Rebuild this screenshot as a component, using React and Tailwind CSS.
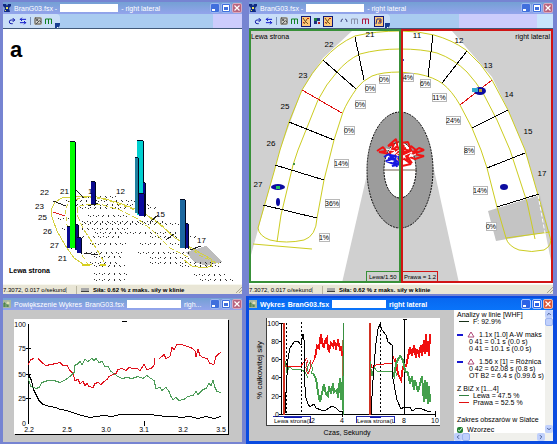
// icons
import { Undo2, ArrowLeftRight, Image, ChevronUp, ChevronDown, ChevronLeft, ChevronRight } from "lucide-react";

// window buttons
function WindowButtons({ active }) {
  const blue = active
    ? "h-[10px] w-[10px] rounded-xs border border-[#a9c4ff] bg-[#2c62e6] flex items-center justify-center"
    : "h-[10px] w-[10px] rounded-xs border border-[#9db8f2] bg-[#406fdc] flex items-center justify-center";
  const red = active
    ? "h-[10px] w-[10px] rounded-xs border border-[#f0b8a8] bg-[#dc5636] flex items-center justify-center"
    : "h-[10px] w-[10px] rounded-xs border border-[#d8a8c0] bg-[#b8647e] flex items-center justify-center";

  return (
    <div className="ml-auto flex shrink-0 gap-px">
      <button aria-label="Minimize" className={blue}>
        <svg viewBox="0 0 6 6" className="size-[6px]">
          <path d="M0 4h3v2H0z" fill="#fff" />
        </svg>
      </button>
      <button aria-label="Maximize" className={blue}>
        <svg viewBox="0 0 6 6" className="size-[6px]">
          <path d="M0 0h6v6H0z M1 2v3h4V2z" fill="#fff" fillRule="evenodd" />
        </svg>
      </button>
      <button aria-label="Close" className={red}>
        <svg viewBox="0 0 6 6" className="size-[6px]">
          <path d="M0.5 0.5l5 5M5.5 0.5l-5 5" stroke="#fff" strokeWidth="1.2" />
        </svg>
      </button>
    </div>
  );
}

function AppIcon({ chart }) {
  if (chart) {
    return (
      <svg viewBox="0 0 8 8" className="size-2 shrink-0">
        <path d="M0 0h8v8H0z" fill="#a8b8a0" />
        <path d="M1 7V3h1v4M4 7V4h1v3" stroke="#3a7a3a" fill="none" />
        <circle cx="5" cy="3" r="1.5" fill="#e0e0b0" />
      </svg>
    );
  }
  return (
    <svg viewBox="0 0 8 8" className="size-2 shrink-0">
      <path d="M0 0h3l1 2 1-2h3v2L6 4l1 4H1l1-4-2-2z" fill="#102a80" />
      <path d="M3 3h2v2H3z M2 6h1v1H2z" fill="#e8e060" />
    </svg>
  );
}

function Window({ title, file, suffix, active, chart, children }) {
  return (
    <section
      className={
        active
          ? "flex min-h-0 min-w-0 flex-col bg-[#0a4be0] pt-[2px] pr-1 pb-[3px] pl-[3px]"
          : "flex min-h-0 min-w-0 flex-col bg-[#7684d2] pt-[2px] pr-1 pb-[2px] pl-[3px]"
      }
    >
      <header
        className={
          active
            ? "flex h-3 shrink-0 items-center gap-[3px] overflow-hidden bg-linear-to-b from-[#0868f0] to-[#0a74fa] text-[7px] leading-none font-bold whitespace-nowrap text-white"
            : "flex h-3 shrink-0 items-center gap-[3px] overflow-hidden bg-linear-to-b from-[#74a0d4] to-[#93a4ec] text-[7px] leading-none whitespace-nowrap text-white"
        }
      >
        <AppIcon chart={chart} />
        {title && <span>{title}</span>}
        <span>{file}</span>
        <span className={chart ? "h-2 w-[54px] shrink-0 bg-white" : "h-2 w-[58px] shrink-0 bg-white"} />
        <span>{suffix}</span>
        <WindowButtons active={active} />
      </header>
      {children}
    </section>
  );
}

// toolbar
function ToolButton({ label, on, children }) {
  return (
    <button
      aria-label={label}
      className={
        on
          ? "flex h-[11px] w-[10px] items-center justify-center border border-[#101878] bg-[#ffc878]"
          : "flex h-[11px] w-[10px] items-center justify-center"
      }
    >
      {children}
    </button>
  );
}

function Waves({ color }) {
  return (
    <svg viewBox="0 0 8 8" className="size-2">
      <path d="M0.5 7V2h3v5M3.5 2h3v5" stroke={color} fill="none" />
    </svg>
  );
}

function ScatterIcon() {
  return (
    <svg viewBox="0 0 8 8" className="size-2">
      <path d="M1 1l2 3M3 4l3 3M5 2l-3 5" stroke="#705020" fill="none" />
      <path d="M5 1h2v1H5z M1 5h1v1H1z" fill="#c02010" />
    </svg>
  );
}

function BaseTools() {
  return (
    <>
      <ToolButton label="Undo">
        <Undo2 className="size-2 -scale-x-100 text-[#1018a8]" strokeWidth={3} />
      </ToolButton>
      <ToolButton label="Swap">
        <ArrowLeftRight className="size-2 text-[#1018c8]" strokeWidth={3} />
      </ToolButton>
      <span className="mx-px h-2 w-px bg-[#7890b8]" />
      <ToolButton label="Picture">
        <Image className="size-2 bg-[#d0d0c8] text-[#505050]" strokeWidth={3} />
      </ToolButton>
      <ToolButton label="Chart">
        <Waves color="#108020" />
      </ToolButton>
    </>
  );
}

function Toolbar({ children, tail }) {
  return (
    <div className="flex h-[15px] shrink-0 border-b border-[#405878] bg-[#a9cbf0]">
      <div className="flex items-center gap-px rounded-r bg-[#c9def8] pl-1">
        {children}
        <span className="mt-auto flex size-[5px] items-end justify-center rounded-br bg-[#183c90]">
          <span className="size-px bg-white" />
        </span>
      </div>
      {tail}
    </div>
  );
}

function StatusBar() {
  return (
    <footer className="flex h-[10px] shrink-0 items-center gap-1 overflow-hidden border-t border-[#f8f8f0] bg-[#e9e6d6] text-[6px] leading-none whitespace-nowrap text-black">
      <span className="w-[64px] shrink-0 border-r border-[#b8b4a0]">7.3072, 0.017 o/sekund</span>
      <span className="h-2 w-[6px] shrink-0 border-r border-[#b8b4a0]" />
      <span className="h-1 w-2 shrink-0 border-b border-[#404040] bg-[#a8a8a8]" />
      <span className="font-bold">Siła: 0.62 % z maks. siły w klinie</span>
      <svg viewBox="0 0 6 6" className="ml-auto size-[6px] shrink-0">
        <path d="M6 0L0 6M6 3L3 6" stroke="#a8a490" />
      </svg>
    </footer>
  );
}

// 3d view
const teeth3d = [
  ["22", 40, 194], ["21", 60, 193], ["1", 88, 193], ["12", 116, 193], ["23", 35, 208], ["25", 38, 219],
  ["26", 43, 233], ["27", 50, 247], ["21", 58, 260], ["15", 156, 216], ["17", 197, 242],
];

const dotRows = [
  [80, 118, 196], [66, 136, 200], [62, 150, 204], [80, 160, 207], [88, 128, 215], [58, 74, 218], [82, 165, 221],
  [80, 180, 223], [62, 130, 228], [95, 190, 232], [68, 120, 236], [150, 198, 236], [90, 126, 243], [140, 185, 243],
  [86, 122, 252], [138, 192, 252], [94, 124, 256], [150, 190, 257], [90, 118, 262], [150, 222, 262],
  [94, 126, 265], [180, 220, 265], [94, 128, 273], [194, 226, 274], [94, 126, 279], [200, 234, 279],
];

// x, y, width, height, fill
const bars = [
  [91, 181, 4, 23, "#0a0a90"],
  [67, 226, 4, 22, "#0a0a90"],
  [75, 224, 3, 26, "#0a0a80"],
  [77, 237, 4, 16, "#0a0a90"],
  [70, 141, 5, 107, "#00ff00"],
  [137, 140, 6, 75, "#00d0d0"],
  [135, 157, 3, 56, "#2080a0"],
  [143, 182, 2, 33, "#0a0a90"],
  [139, 193, 5, 23, "#0a0aa0"],
  [185, 223, 3, 25, "#0a0a90"],
  [180, 199, 5, 49, "#1c68a0"],
];

function Force3D() {
  return (
    <div className="min-h-0 flex-1 bg-white">
      <svg viewBox="3 29 239 255" className="block h-full w-full" shapeRendering="crispEdges">
        <text x="10" y="57" fontSize="22" fontWeight="bold">a</text>
        <path d="M186 252l20-6 16 16-16 4-12-4z" fill="#bdbdbd" />
        {dotRows.map(([x1, x2, y]) => (
          <g key={`${x1}-${y}`} stroke="#303030">
            <path d={`M${x1} ${y}.5H${x2}`} strokeDasharray="1 4" />
            <path d={`M${x1 + 2} ${y + 1}.5H${x2}`} strokeDasharray="1 5" />
          </g>
        ))}
        <g fill="none" stroke="#d4d040">
          <path d="M92 264h-9l-9-6-9-13-8-14-5-14-1-7 4-8 7-4 12-1 18-1 14 3 16 5 18 7 15 9 20 18 20 12 16 9 1 7-8 2-12-2-8-6" />
          <path d="M104 262l-8-14-12-18-7-15v-8l10-3 16 1 17 5 18 9 14 11 18 18 20 10" strokeDasharray="6 2" />
          <path d="M88 265l-12-20-9-20-2-16 5-8 15-4 22 3 28 10 24 13 18 16 24 17 18 8" strokeDasharray="4 3" />
        </g>
        <path d="M53 201l13 5M76 190l8 8M150 222l8-7M166 240l8-6M190 250l11-4M84 253l14 2M88 206l10-3" stroke="#202020" />
        <path d="M53 212l12 4" stroke="#e02020" />
        <path d="M82 265h8M100 265h6" stroke="#d8d020" strokeWidth="2" />
        {bars.map(([x, y, w, h, fill]) => (
          <g key={`${x}-${y}`}>
            <path d={`M${x} ${y}h${w}v${h}h-${w}z`} fill={fill} />
            <path d={`M${x} ${y}.5h${w}M${x + w}.5 ${y + 1}v${h}`} stroke="#000820" />
          </g>
        ))}
        <g fontSize="8">
          {teeth3d.map(([label, x, y]) => (
            <text key={`${x}-${y}`} x={x} y={y + 1}>{label}</text>
          ))}
        </g>
        <text x="9" y="273" fontSize="7" fontWeight="bold">Lewa strona</text>
      </svg>
    </div>
  );
}

// arch view
const teeth = [
  ["22", 329, 44], ["21", 370, 34], ["23", 303, 75], ["25", 285, 106], ["26", 271, 143], ["27", 258, 184],
  ["11", 417, 35], ["12", 459, 40], ["13", 488, 65], ["14", 509, 94], ["15", 528, 131], ["17", 542, 173],
];

const percents = [
  ["0%", 384, 79], ["0%", 370, 88], ["0%", 360, 104], ["0%", 349, 130], ["14%", 341, 163], ["36%", 332, 203],
  ["1%", 324, 237], ["4%", 408, 77], ["6%", 425, 83], ["11%", 439, 97], ["24%", 453, 120], ["8%", 469, 150],
  ["14%", 480, 190], ["0%", 491, 226],
];

function Arch() {
  return (
    <div className="min-h-0 flex-1 bg-white">
      <svg viewBox="249 29 304 255" className="block h-full w-full">
        <path d="M251 31H352L323 58L302 90L280 150L251 255z" fill="#d0d0d0" />
        <path d="M452 31H552V266L538 195L525 150L508 110L492 77z" fill="#d0d0d0" />
        <path d="M368 170L342 283H459L433 165z" fill="#d0d0d0" />
        <ellipse cx="400" cy="170" rx="33" ry="58" fill="#9c9c9c" stroke="#000" strokeDasharray="2 1" />
        <ellipse cx="400" cy="170" rx="16" ry="28" fill="#fff" stroke="#000" strokeDasharray="2 1" />
        <path d="M488 211l52-16 9 37-53 9z" fill="#c4c4c4" />

        <g fill="none" stroke="#cccc20">
          <path d="M258 228L274 172L280 150L289 122L302 90Q312 72 323 60Q337 44 355 36Q376 31 400 31Q418 31 434 35Q452 40 466 50Q482 64 492 80L508 110L525 150L538 195L550 237Q553 245 544 250Q532 253 519 250Q508 246 506 238L497 207L487 168L481 150L472 128L460 105Q452 91 443 84Q434 77 418 74L400 72Q382 72 372 76Q362 81 357 88Q347 102 343 112L334 140L324 180L317 218Q316 236 304 240Q286 244 270 240Q259 236 258 228" />
          <path d="M277 242L281 215L293 165L298 150L318 100Q326 84 337 72Q347 60 360 54Q378 49 400 49Q422 49 437 53Q454 59 467 72Q476 82 483 93L497 120L510 150L527 202L535 239" />
          <path d="M253 244L312 249M506 238L550 232" />
        </g>
        <g stroke="#000" shapeRendering="crispEdges">
          <path d="M355 37L364 80M323 60L356 89M289 122L334 140M275 165L324 180M263 205L317 218" />
          <path d="M433 35L428 77M467 51L442 83M508 110L472 128M525 153L487 168M539 194L497 207" />
        </g>
        <path d="M302 90L342 113M492 80L460 105" stroke="#e01010" shapeRendering="crispEdges" />
        <path d="M538 195l7 38" stroke="#fff" strokeDasharray="4 2" />

        <g fill="#0c0ca0">
          <ellipse cx="278" cy="187" rx="7" ry="3" />
          <ellipse cx="278" cy="202" rx="2" ry="4" />
          <ellipse cx="504" cy="187" rx="4" ry="3" />
          <ellipse cx="480" cy="91" rx="6" ry="4" />
          <circle cx="403" cy="60" r="1" />
        </g>
        <path d="M276 186h4v3h-4z" fill="#20c060" />
        <path d="M293 163h2v2h-2z" fill="#409040" />
        <path d="M472 88h6v4h-6z" fill="#30a8d0" />
        <path d="M479 89h3v3h-3z" fill="#c0a030" />

        <path d="M384 170h32" stroke="#706050" />
        <g fill="none" strokeLinejoin="bevel">
          <path
            d="M377 151L383 147L386 151L379 152L390 154L394 144L388 146L396 139L398 149L389 152L402 150L399 141L404 153L395 156L404 146L400 143L408 142L411 150L403 155L417 151L411 146L407 156L419 148L424 150L413 154L424 156L415 159L407 156L412 163L403 158L411 164L402 166L398 158L408 160L404 152L414 152L396 147L392 151L406 148"
            stroke="#f01414" strokeWidth="2"
          />
          <path d="M386 149l9 2-4 4 8-5 4 6 9-4-3 5 7-3M399 143l3 8-6 4 8 3" stroke="#fff" />
          <path
            d="M384 157L389 154L392 159L386 161L394 164L396 156L390 155L399 163L392 166L401 164L398 156M388 158L395 160L397 167"
            stroke="#1818e0" strokeWidth="2"
          />
        </g>

        <g fontSize="7" textAnchor="middle">
          {teeth.map(([label, x, y]) => (
            <text key={`${x}-${y}`} x={x} y={y + 3} fontSize="8">{label}</text>
          ))}
          {percents.map(([label, x, y]) => (
            <g key={`${x}-${y}`}>
              <rect
                x={x - (label.length > 2 ? 7 : 5)} y={y - 4} width={label.length > 2 ? 14 : 10} height="8"
                fill="#fff" stroke="#b8b8b8" shapeRendering="crispEdges"
              />
              <text x={x} y={y + 3}>{label}</text>
            </g>
          ))}
        </g>

        <g fill="none" strokeWidth="2" shapeRendering="crispEdges">
          <path d="M250 30H400V282H250z" stroke="#389038" />
          <path d="M402 30H552V282H402z" stroke="#d01414" />
        </g>
        <path d="M366 281V271H399" stroke="#389038" fill="none" shapeRendering="crispEdges" />
        <path d="M403 271H437V281" stroke="#d01414" fill="none" shapeRendering="crispEdges" />
        <g fontSize="6">
          <text x="369" y="279">Lewa/1.50</text>
          <text x="404" y="279">Prawa = 1.2</text>
        </g>
        <g fontSize="7">
          <text x="251" y="39">Lewa strona</text>
          <text x="550" y="39" textAnchor="end">right lateral</text>
        </g>
      </svg>
    </div>
  );
}

// zoomed chart
function ZoomChart() {
  return (
    <div className="min-h-0 flex-1 bg-[#c6c6c6]">
      <svg viewBox="3 310 239 131" className="block h-full w-full" shapeRendering="crispEdges">
        <rect x="15" y="319" width="214" height="115" fill="#000" />
        <rect x="14" y="318" width="214" height="115" fill="#fff" />
        <path d="M28.5 323V423M26 347.5h5M26 373.5h5M26 397.5h5M144.5 420v5M122 320.5h5" stroke="#000" />
        <g fill="none">
          <path
            d="M28 373L31 379L34 390L39 400L43 404L50 406L56 407L60 409L67 410L75 413L82 415L90 417L96 416L104 415L112 416L120 414L150 414L158 415L166 416L174 416L181 417L190 416L198 418L206 416L214 418L221 416"
            stroke="#000"
          />
          <path
            d="M28 364L31 359L34 358M38 358L42 362L46 365L51 364L56 363L60 362L63 365L67 365L70 370L73 373L75 380L78 379L80 383L83 381L85 385L87 383L89 386L93 387L95 383L98 382L101 384L104 381L107 379L109 376L113 374L116 373L118 369L122 368L126 370L129 367L133 368L137 368L140 370L144 364L147 369L151 368L154 365L155 358M159 358L162 356L164 354L166 358L170 356L172 347L174 349L177 344L182 344L187 346L191 347L195 350L196 356L198 349L200 355L203 357L207 358L210 363L214 364L216 356L219 353L221 352"
            stroke="#e0101c"
          />
          <path
            d="M28 378L31 386L36 388L39 387L42 382L48 380L54 380L60 382L66 379L70 376L74 372L74 365L77 364L80 361L82 364L85 359L88 361L92 358L94 360L96 358L99 362L102 361L105 366L108 366L111 371L115 374L118 376L122 378L127 377L132 378L138 376L143 378L147 375L151 378L154 380L156 388L160 387L162 390L166 387L169 391L171 396L173 399L176 397L179 400L184 399L188 396L193 395L196 391L198 394L203 389L206 388L209 383L211 385L213 380L215 387L217 391L221 392"
            stroke="#4c9c58"
          />
        </g>
        <g fontSize="7" textAnchor="end">
          <text x="26" y="326">100</text>
          <text x="26" y="350">75</text>
          <text x="26" y="376">50</text>
          <text x="26" y="400">25</text>
          <text x="26" y="425">0</text>
        </g>
        <g fontSize="7" textAnchor="middle">
          <text x="29" y="431">2.2</text>
          <text x="67" y="431">2.5</text>
          <text x="106" y="431">3.0</text>
          <text x="144" y="431">3.1</text>
          <text x="183" y="431">3.2</text>
          <text x="221" y="431">3.5</text>
        </g>
      </svg>
    </div>
  );
}

// force over time chart
const yLabels = [["100", 323], ["80", 341], ["60", 359], ["40", 377], ["20", 396], ["0", 414]];
const xLabels = [["2", 313], ["4", 342], ["8", 404], ["10", 435]];

function TimeChart() {
  return (
    <svg viewBox="249 310 205 131" className="block h-full min-w-0 flex-1" shapeRendering="crispEdges">
      <rect x="266" y="318" width="174" height="107" fill="#fff" />
      <path d="M266.5 318V425M266 425.5H440" stroke="#404040" fill="none" />
      <path d="M281.5 323V415M279 323.5h5M279 341.5h3M279 359.5h3M279 377.5h3M279 396.5h3M279 414.5H436M435.5 411v6M342.5 411v6" stroke="#000" fill="none" />
      <path d="M284 323v92M370 323v92" stroke="#d03020" strokeWidth="2" />
      <path d="M343.5 323v92" stroke="#389040" />
      <path d="M342.5 340v68" stroke="#a07040" />
      <path d="M286.5 323v92M301.5 322v93M380.5 322v93" stroke="#000" strokeDasharray="2 2" />
      <path d="M404.5 319v96M403 319.5h4" stroke="#000" />
      <g fill="none">
        <g stroke="#f01010">
          <path d="M285 362L287 368L290 366L301 366L304 362L307 358M312 364L315 358" />
          <path
            d="M315 358L317 346L319 348L321 334L322 342L324 348L325 341L327 338L328 349L329 351L331 343L333 346L334 340L336 348L338 341L340 349L341 346L342 356"
            strokeWidth="2"
          />
          <path d="M370 360L372 368L376 365L392 363L393 356L395 362L396 358" />
          <path
            d="M396 361L398 374L401 380L403 367L406 366L408 357L410 347L412 356L414 345L416 358L417 349L419 355L421 345L422 356L424 340L425 354L426 334L427 352L428 341L429 356L430 334"
            strokeWidth="2"
          />
        </g>
        <g stroke="#44a04c">
          <path d="M285 361L287 373L289 367L294 370L301 369L305 372L308 378M370 361L372 376L374 367L377 371L392 372" />
          <path
            d="M313 373L316 379L318 392L320 402L322 393L324 384L326 394L328 396L329 386L331 394L333 383L334 392L337 390L338 398L340 378L341 400L343 376V410"
            strokeWidth="2"
          />
          <path
            d="M392 371L394 376L396 364L400 356L403 360L405 371L408 373L410 384L412 376L414 390L415 380L418 392L420 384L422 376L424 402L425 380L426 399L427 382L428 404L429 386L430 402"
            strokeWidth="2"
          />
          <path d="M309 374q-3-7 1-12q4 6 1 12M397 376q-4-10 1-18" />
        </g>
        <path d="M308 360q-4 8 0 14q4-6 2-14" stroke="#e03030" />
        <path
          d="M285 414L286 392L288 359L290 348L294 342L298 341L301 345L303 334L304 340L304 375L306 398L308 404L310 407L314 404L316 408L321 410L326 410L329 408L332 406L336 408L339 411L342 412"
          stroke="#000"
        />
        <path
          d="M371 414L372 396L374 365L376 343L378 329L380 324L382 330L386 335L388 342L392 345L393 379L397 400L401 409L404 407L410 407L412 411L417 408L422 409L427 411L431 411"
          stroke="#000"
        />
      </g>
      <path d="M284 416.5h18M370 416.5h11" stroke="#1018b0" strokeWidth="2" />
      <path d="M273 416.5H310V423M356 423V416.5H394V423" stroke="#2028b0" fill="none" />
      <text x="274" y="423" fontSize="6">Lewa strona(L</text>
      <text x="357" y="423" fontSize="6">Lewa strona(L</text>
      <g fontSize="7">
        <g textAnchor="end">
          {yLabels.map(([label, y]) => (
            <text key={label} x="279" y={y + 3}>{label}</text>
          ))}
        </g>
        <g textAnchor="middle">
          {xLabels.map(([label, x]) => (
            <text key={label} x={x} y="423">{label}</text>
          ))}
          <text x="347" y="435">Czas, Sekundy</text>
          <text transform="translate(262 370) rotate(-90)" fontSize="8">% całkowitej siły</text>
        </g>
      </g>
    </svg>
  );
}

// legend panel
function MarkerRow({ children }) {
  return (
    <li className="flex items-center gap-1">
      <span className="h-[2px] w-[6px] bg-[#1414d0]" />
      <svg viewBox="0 0 8 7" className="h-[7px] w-2 shrink-0">
        <path d="M4 1L7 6H1z" fill="none" stroke="#b04878" />
      </svg>
      <span>{children}</span>
    </li>
  );
}

function Legend() {
  const scrollButton = "flex size-2 shrink-0 items-center justify-center rounded-xs bg-[#c0d0fc] text-[#405890]";

  return (
    <aside className="flex w-[99px] shrink-0 flex-col bg-white">
      <div className="flex min-h-0 flex-1">
        <ul className="min-w-0 flex-1 overflow-hidden pt-px pl-[3px] text-[7px] leading-[7px] whitespace-nowrap text-black">
          <li>Analizy w linie [WHF]</li>
          <li className="flex items-center gap-1 pl-[2px]">
            <span className="h-px w-[10px] bg-[#183018]" />F: 92.9%
          </li>
          <li className="h-[6px]" />
          <MarkerRow>1.1x [1.0] A-W maks</MarkerRow>
          <li className="pl-3">0 41 = 0.1 s (0.0 s)</li>
          <li className="pl-3">0 41 = 10.1 s (0.0 s)</li>
          <li className="h-[6px]" />
          <MarkerRow>1.56 x [1] = Różnica</MarkerRow>
          <li className="pl-3">0 42 = 62.08 s (0.8 s)</li>
          <li className="pl-3">OT B2 = 6.4 s (0.99.6 s)</li>
          <li className="h-[6px]" />
          <li>Z BiZ x [1...4]</li>
          <li className="flex items-center gap-1 pl-[2px]">
            <span className="h-px w-[10px] bg-[#308040]" />Lewa = 47.5 %
          </li>
          <li className="flex items-center gap-1 pl-[2px]">
            <span className="h-px w-[10px] bg-[#e01010]" />Prawa = 52.5 %
          </li>
          <li className="h-[10px]" />
          <li>Zakres obszarów w Siatce</li>
          <li className="h-[3px]" />
          <li>
            <label className="flex items-center gap-1">
              <input type="checkbox" defaultChecked className="size-[6px] accent-[#208030]" />
              Wzorzec
            </label>
          </li>
        </ul>
        <div className="flex w-2 shrink-0 flex-col bg-[#f0f0ec]">
          <button aria-label="Scroll up" className={scrollButton}><ChevronUp className="size-[6px]" strokeWidth={4} /></button>
          <span className="h-2 rounded-xs border border-[#9cb4f0] bg-[#c0d0fc]" />
          <button aria-label="Scroll down" className={`mt-auto ${scrollButton}`}><ChevronDown className="size-[6px]" strokeWidth={4} /></button>
        </div>
      </div>
      <div className="flex h-2 shrink-0 bg-[#f0f0ec] pr-2">
        <button aria-label="Scroll left" className={scrollButton}><ChevronLeft className="size-[6px]" strokeWidth={4} /></button>
        <span className="w-2 rounded-xs border border-[#9cb4f0] bg-[#c0d0fc]" />
        <button aria-label="Scroll right" className={`ml-auto ${scrollButton}`}><ChevronRight className="size-[6px]" strokeWidth={4} /></button>
      </div>
    </aside>
  );
}

export default function App() {
  return (
    <main className="grid h-screen grid-cols-[246fr_311fr] grid-rows-[2fr_1fr] overflow-hidden bg-[#7684d2] font-['Liberation_Sans',sans-serif]">
      <Window file="BranG03.fsx -" suffix="- right lateral">
        <Toolbar tail={<div className="ml-auto w-[29px] bg-[#ccccfc]" />}>
          <BaseTools />
        </Toolbar>
        <Force3D />
        <StatusBar />
      </Window>

      <Window file="BranG03.fsx -" suffix="- right lateral">
        <Toolbar
          tail={
            <>
              <div className="ml-auto w-[78px] bg-[#ccccfc]" />
              <div className="w-4 bg-[#c8e4fc]" />
            </>
          }
        >
          <BaseTools />
          <ToolButton label="Centre of force" on><ScatterIcon /></ToolButton>
          <ToolButton label="Grid">
            <svg viewBox="0 0 8 8" className="size-2">
              <path d="M1 1h3v3H1z" fill="#208040" />
              <path d="M4 1h3v3H4zM1 4h3v3H1z" fill="#203080" />
              <path d="M5 5h2v2H5z" fill="#c02020" />
            </svg>
          </ToolButton>
          <ToolButton label="Trajectory" on><ScatterIcon /></ToolButton>
          <span className="w-1" />
          <ToolButton label="Arch">
            <svg viewBox="0 0 8 8" className="size-2">
              <path d="M1 5Q1 2 3 2M5 2Q7 2 7 5" stroke="#404880" fill="none" />
            </svg>
          </ToolButton>
          <ToolButton label="Compare"><Waves color="#8890a8" /></ToolButton>
          <ToolButton label="Regions"><Waves color="#b01840" /></ToolButton>
          <span className="w-px" />
          <ToolButton label="Tooth" on>
            <svg viewBox="0 0 8 8" className="size-2">
              <path d="M1 7L2 2h4v4H3" stroke="#283080" fill="none" />
              <path d="M4 3h2v2H4z" fill="#a04020" />
            </svg>
          </ToolButton>
        </Toolbar>
        <Arch />
        <StatusBar />
      </Window>

      <Window title="Powiększenie Wykres" file="BranG03.fsx" suffix="righ..." chart>
        <ZoomChart />
      </Window>

      <Window title="Wykres" file="BranG03.fsx" suffix="right lateral" active chart>
        <div className="flex min-h-0 flex-1 bg-[#c6c6c6]">
          <TimeChart />
          <Legend />
        </div>
      </Window>
    </main>
  );
}
